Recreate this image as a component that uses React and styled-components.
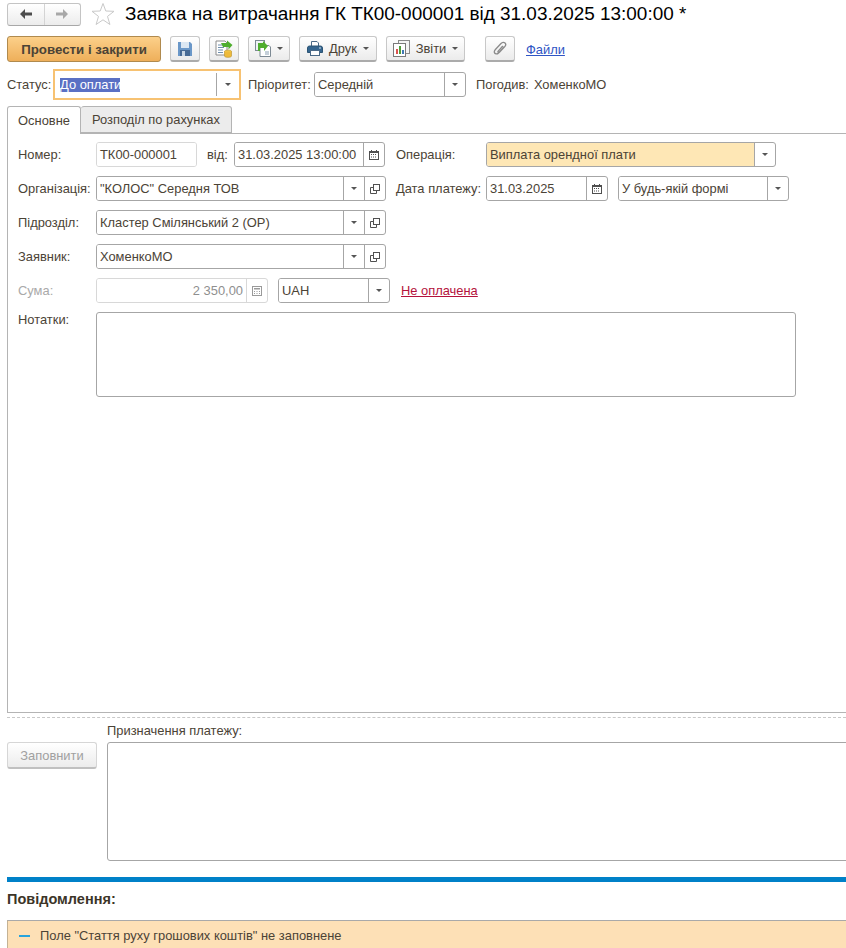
import React from 'react';
import styled, { createGlobalStyle } from 'styled-components';

const BackIcon = ({ color }) => (
  <svg width="14" height="12" viewBox="0 0 14 12">
    <path d="M6 1 L1 6 L6 11 V7.5 H13 V4.5 H6 Z" fill={color} />
  </svg>
);

const ForwardIcon = ({ color }) => (
  <svg width="14" height="12" viewBox="0 0 14 12">
    <path d="M8 1 L13 6 L8 11 V7.5 H1 V4.5 H8 Z" fill={color} />
  </svg>
);

const StarIcon = () => (
  <svg width="24" height="24" viewBox="0 0 24 24">
    <path
      d="M12 1.5 L14.8 9 L23 9.3 L16.5 14.4 L18.9 22.5 L12 17.8 L5.1 22.5 L7.5 14.4 L1 9.3 L9.2 9 Z"
      fill="#fff"
      stroke="#c9c9c9"
      strokeWidth="1"
    />
  </svg>
);

const SaveIcon = () => (
  <svg width="14" height="14" viewBox="0 0 14 14">
    <path d="M0 0 H12 L14 2 V14 H0 Z" fill="#6a97c8" />
    <rect x="3" y="0" width="8" height="6" fill="#dbe7f3" />
    <rect x="2" y="8" width="10" height="6" fill="#476a94" />
    <rect x="4" y="9" width="3" height="5" fill="#c9d6e4" />
  </svg>
);

const PostIcon = () => (
  <svg width="18" height="18" viewBox="0 0 18 18">
    <path d="M1 1 H10 L12 3 V15 H1 Z" fill="#fff" stroke="#8c8c8c" />
    <path d="M3 5 H8 M3 7.5 H9 M3 10 H8 M3 12.5 H8" stroke="#6f8fae" />
    <path d="M6 3 H12 V0.5 L17.5 5 L13.5 9.5 V7 H8 Z" fill="#4fae2e" />
    <ellipse cx="13" cy="11.5" rx="3.5" ry="1.5" fill="#f2cb4d" stroke="#b8902a" strokeWidth="0.6" />
    <path d="M9.5 11.5 V16 C9.5 17.8 16.5 17.8 16.5 16 V11.5" fill="#eeba3a" stroke="#b8902a" strokeWidth="0.6" />
  </svg>
);

const CopyIcon = () => (
  <svg width="16" height="17" viewBox="0 0 16 17">
    <rect x="0.5" y="0.5" width="9" height="10" fill="#eef2f5" stroke="#7d8a94" />
    <path d="M5 5.5 H14 L15.5 7 V16.5 H5 Z" fill="#fff" stroke="#7d8a94" />
    <path d="M3 3 H8 V1 L13 6 L9 11 V8 H5 V11 H3 Z" fill="#4fae2e" />
    <path d="M10 12 H14 M10 14 H14" stroke="#8aa0b2" />
  </svg>
);

const PrintIcon = () => (
  <svg width="16" height="15" viewBox="0 0 16 15">
    <path d="M4.5 5 V0.5 H10 L11.5 2 V5" fill="#fff" stroke="#4b6a88" />
    <path d="M0.5 7 Q0.5 5 2.5 5 H13.5 Q15.5 5 15.5 7 V11.5 H0.5 Z" fill="#34658f" stroke="#2c5474" />
    <rect x="3.5" y="9.5" width="9" height="5" fill="#fff" stroke="#4b6a88" />
    <rect x="12" y="6.5" width="2" height="1" fill="#cfe0ee" />
  </svg>
);

const ReportIcon = () => (
  <svg width="17" height="17" viewBox="0 0 17 17">
    <rect x="5.5" y="0.5" width="11" height="13" fill="#f4f4f4" stroke="#8a8a8a" />
    <rect x="0.5" y="3.5" width="12" height="13" fill="#fff" stroke="#7a7a7a" />
    <rect x="3" y="9" width="2" height="5" fill="#d9534f" />
    <rect x="6" y="6" width="2" height="8" fill="#4f9d3a" />
    <rect x="9" y="10" width="2" height="4" fill="#3f78b5" />
  </svg>
);

const ClipIcon = () => (
  <svg width="14" height="15" viewBox="0 0 14 15" fill="none">
    <path
      d="M11.5 5.5 L5.5 12 C4 13.6 1.8 13 1.4 11.5 C1 10.3 1.6 9.4 2.4 8.5 L8 2.5 C9.3 1.1 11 1 12 2 C13 3 12.9 4.4 11.8 5.6 L6.4 11.2 C5.6 12 4.4 11.2 5.2 10.1 L9.8 5"
      stroke="#8a8a8a"
      strokeWidth="1.3"
    />
  </svg>
);

const CalendarIcon = () => (
  <svg width="10" height="10" viewBox="0 0 10 10">
    <rect x="0" y="1" width="10" height="9" fill="#4f4f4f" />
    <rect x="2" y="0" width="1" height="2" fill="#4f4f4f" />
    <rect x="7" y="0" width="1" height="2" fill="#4f4f4f" />
    <rect x="1" y="3" width="8" height="6" fill="#fff" />
    <path d="M2 4 H3 V5 H2 Z M4 4 H5 V5 H4 Z M6 4 H7 V5 H6 Z M2 6.5 H3 V7.5 H2 Z M4 6.5 H5 V7.5 H4 Z M6 6.5 H7 V7.5 H6 Z" fill="#4f4f4f" />
  </svg>
);

const CalcIcon = () => (
  <svg width="10" height="10" viewBox="0 0 10 10">
    <rect x="0.5" y="0.5" width="9" height="9" fill="#fff" stroke="#9a9a9a" />
    <rect x="2" y="2" width="6" height="1.5" fill="#9a9a9a" />
    <path d="M2 5 H3 V6 H2 Z M4.5 5 H5.5 V6 H4.5 Z M7 5 H8 V6 H7 Z M2 7 H3 V8 H2 Z M4.5 7 H5.5 V8 H4.5 Z M7 7 H8 V8 H7 Z" fill="#9a9a9a" />
  </svg>
);

const OpenIcon = () => (
  <svg width="10" height="10" viewBox="0 0 10 10" fill="none">
    <rect x="3.5" y="0.5" width="6" height="6" stroke="#505050" />
    <path d="M3 3.5 H0.5 V9.5 H6.5 V7" stroke="#505050" />
  </svg>
);

const Caret = styled.span`
  width: 0;
  height: 0;
  border-left: 3px solid transparent;
  border-right: 3px solid transparent;
  border-top: 3px solid #555;
`;

function App() {
  return (
    <Page>
      <GlobalStyle />
      <Header>
        <NavGroup>
          <NavButton><BackIcon color="#4d4d4d" /></NavButton>
          <NavButton><ForwardIcon color="#a8a8a8" /></NavButton>
        </NavGroup>
        <StarIcon />
        <Title>Заявка на витрачання ГК ТК00-000001 від 31.03.2025 13:00:00 *</Title>
      </Header>

      <Toolbar>
        <PrimaryButton>Провести і закрити</PrimaryButton>
        <ToolButton $w={30}><SaveIcon /></ToolButton>
        <ToolButton $w={30}><PostIcon /></ToolButton>
        <ToolButton $w={42}><CopyIcon /><Caret /></ToolButton>
        <ToolButton $w={78}><PrintIcon /><span>Друк</span><Caret /></ToolButton>
        <ToolButton $w={79}><ReportIcon /><span>Звіти</span><Caret /></ToolButton>
        <ClipButton $w={30}><ClipIcon /></ClipButton>
        <ToolLink>Файли</ToolLink>
      </Toolbar>

      <StatusRow>
        <StatusLabel>Статус:</StatusLabel>
        <FocusedField>
          <FocusedValue><Selected>До оплати</Selected></FocusedValue>
          <FocusedCaret><Caret /></FocusedCaret>
        </FocusedField>
        <PriorityLabel>Пріоритет:</PriorityLabel>
        <Field $w={152}>
          <Value>Середній</Value>
          <FieldButton><Caret /></FieldButton>
        </Field>
        <ApprovedLabel>Погодив:</ApprovedLabel>
        <ApprovedName>ХоменкоМО</ApprovedName>
      </StatusRow>

      <Tabs>
        <Tab $active>Основне</Tab>
        <Tab>Розподіл по рахунках</Tab>
      </Tabs>

      <Panel>
        <FormRow>
          <Label>Номер:</Label>
          <Field $w={101} $light>
            <Value>ТК00-000001</Value>
          </Field>
          <InnerLabel>від:</InnerLabel>
          <Field $w={151}>
            <Value>31.03.2025 13:00:00</Value>
            <FieldButton><CalendarIcon /></FieldButton>
          </Field>
          <SideLabel $gap={11}>Операція:</SideLabel>
          <Field $w={290}>
            <Value $fill="#fee7b5">Виплата орендної плати</Value>
            <FieldButton><Caret /></FieldButton>
          </Field>
        </FormRow>
        <FormRow>
          <Label>Організація:</Label>
          <Field $w={290}>
            <Value>"КОЛОС" Середня ТОВ</Value>
            <FieldButton><Caret /></FieldButton>
            <FieldButton><OpenIcon /></FieldButton>
          </Field>
          <SideLabel $gap={10}>Дата платежу:</SideLabel>
          <Field $w={122}>
            <Value>31.03.2025</Value>
            <FieldButton><CalendarIcon /></FieldButton>
          </Field>
          <Field $w={171} $gap={10}>
            <Value>У будь-якій формі</Value>
            <FieldButton><Caret /></FieldButton>
          </Field>
        </FormRow>
        <FormRow>
          <Label>Підрозділ:</Label>
          <Field $w={290}>
            <Value>Кластер Смілянський 2 (ОР)</Value>
            <FieldButton><Caret /></FieldButton>
            <FieldButton><OpenIcon /></FieldButton>
          </Field>
        </FormRow>
        <FormRow>
          <Label>Заявник:</Label>
          <Field $w={290}>
            <Value>ХоменкоМО</Value>
            <FieldButton><Caret /></FieldButton>
            <FieldButton><OpenIcon /></FieldButton>
          </Field>
        </FormRow>
        <FormRow>
          <Label $muted>Сума:</Label>
          <Field $w={172} $light>
            <Value $right $muted>2 350,00</Value>
            <FieldButton $light><CalcIcon /></FieldButton>
          </Field>
          <Field $w={112} $gap={10}>
            <Value>UAH</Value>
            <FieldButton><Caret /></FieldButton>
          </Field>
          <StatusLink>Не оплачена</StatusLink>
        </FormRow>
        <NotesRow>
          <Label>Нотатки:</Label>
          <Notes />
        </NotesRow>
      </Panel>

      <DashedLine />

      <PurposeGrid>
        <FillButton>Заповнити</FillButton>
        <PurposeColumn>
          <PurposeLabel>Призначення платежу:</PurposeLabel>
          <PurposeBox />
        </PurposeColumn>
      </PurposeGrid>

      <BlueBar />
      <MessagesTitle>Повідомлення:</MessagesTitle>
      <Message>
        <MessageDash />
        Поле "Стаття руху грошових коштів" не заповнене
      </Message>
    </Page>
  );
}

export default App;

const GlobalStyle = createGlobalStyle`
  html, body {
    margin: 0;
    padding: 0;
    background: #fff;
    overflow: hidden;
  }
  * {
    box-sizing: border-box;
  }
`;

const Page = styled.div`
  width: 846px;
  height: 948px;
  overflow: hidden;
  padding: 3px 0 0 7px;
  font-family: 'Liberation Sans', Arial, sans-serif;
  font-size: 12.9px;
  color: #4b4336;
`;

const Header = styled.div`
  display: flex;
  align-items: center;
  height: 22px;
`;

const NavGroup = styled.div`
  display: flex;
  width: 74px;
  height: 23px;
  margin-right: 10px;
  border: 1px solid #c4c4c4;
  border-bottom-color: #a8a8a8;
  border-radius: 3px;
  background: linear-gradient(#fff, #ececec);
`;

const NavButton = styled.div`
  flex: 1;
  display: flex;
  align-items: center;
  justify-content: center;

  & + & {
    border-left: 1px solid #d4d4d4;
  }
`;

const Title = styled.div`
  margin-left: 10px;
  font-size: 18.93px;
  color: #000;
  white-space: nowrap;
`;

const Toolbar = styled.div`
  display: flex;
  align-items: center;
  gap: 9px;
  height: 26px;
  margin-top: 11px;
`;

const PrimaryButton = styled.div`
  width: 154px;
  height: 26px;
  display: flex;
  align-items: center;
  justify-content: center;
  border: 1px solid #b08a4e;
  border-radius: 3px;
  background: linear-gradient(#fcd08a, #eeaf5a);
  font-size: 13.3px;
  font-weight: 700;
  color: #4b4336;
`;

const ToolButton = styled.div`
  width: ${props => props.$w}px;
  height: 26px;
  display: flex;
  align-items: center;
  justify-content: center;
  gap: 6px;
  border: 1px solid #c8c8c8;
  border-bottom: 2px solid #ababab;
  border-radius: 3px;
  background: linear-gradient(#fff, #ebebeb);
`;

const ClipButton = styled(ToolButton)`
  margin-left: 11px;
`;

const ToolLink = styled.a`
  margin-left: 2px;
  color: #2f55c4;
  text-decoration: underline;
`;

const StatusRow = styled.div`
  display: flex;
  align-items: center;
  height: 31px;
  margin-top: 7px;
`;

const StatusLabel = styled.span`
  width: 46px;
`;

const FocusedField = styled.div`
  width: 188px;
  height: 31px;
  display: flex;
  align-items: center;
  border: 2px solid #f7c272;
`;

const FocusedValue = styled.div`
  flex: 1;
  padding-left: 5px;
`;

const Selected = styled.span`
  display: inline-block;
  width: 60px;
  height: 14px;
  line-height: 14px;
  background: #5a70c4;
  color: #fff;
  white-space: nowrap;
`;

const FocusedCaret = styled.div`
  width: 23px;
  height: 23px;
  display: flex;
  align-items: center;
  justify-content: center;
  border-left: 1px solid #a6a6a6;
`;

const PriorityLabel = styled.span`
  width: 66px;
  margin-left: 7px;
`;

const ApprovedLabel = styled.span`
  margin-left: 10px;
`;

const ApprovedName = styled.span`
  margin-left: 5px;
`;

const Tabs = styled.div`
  display: flex;
  height: 27px;
  margin-top: 6px;
`;

const Tab = styled.div`
  display: flex;
  align-items: center;
  justify-content: center;
  width: ${props => (props.$active ? '74px' : '151px')};
  border: 1px solid #b4b4b4;
  border-bottom: ${props => (props.$active ? 'none' : '1px solid #b4b4b4')};
  border-left: ${props => (props.$active ? '1px solid #b4b4b4' : 'none')};
  border-radius: 3px 3px 0 0;
  background: ${props => (props.$active ? '#fff' : '#ececec')};
  position: relative;
  z-index: ${props => (props.$active ? 1 : 0)};
  margin-bottom: ${props => (props.$active ? '-1px' : '0')};
  height: ${props => (props.$active ? '28px' : '27px')};
`;

const Panel = styled.div`
  width: 860px;
  height: 580px;
  display: flex;
  flex-direction: column;
  gap: 9px;
  padding: 8px 0 0 10px;
  border: 1px solid #b4b4b4;
`;

const FormRow = styled.div`
  display: flex;
  align-items: center;
  height: 25px;
`;

const NotesRow = styled.div`
  display: flex;
  align-items: flex-start;
`;

const Label = styled.span`
  width: 78px;
  color: ${props => (props.$muted ? '#a9a9a9' : '#4b4336')};
  white-space: nowrap;
`;

const InnerLabel = styled.span`
  width: 37px;
  padding-left: 10px;
`;

const SideLabel = styled.span`
  width: 90px;
  margin-left: ${props => props.$gap}px;
  white-space: nowrap;
`;

const Field = styled.div`
  width: ${props => props.$w}px;
  height: 25px;
  flex: none;
  display: flex;
  margin-left: ${props => props.$gap || 0}px;
  border: 1px solid ${props => (props.$light ? '#d8d8d8' : '#a6a6a6')};
  border-radius: 3px;
  overflow: hidden;
  background: #fff;
`;

const Value = styled.div`
  flex: 1;
  display: flex;
  align-items: center;
  justify-content: ${props => (props.$right ? 'flex-end' : 'flex-start')};
  padding: 0 3px;
  background: ${props => props.$fill || '#fff'};
  color: ${props => (props.$muted ? '#8f8f8f' : '#4b4336')};
  white-space: nowrap;
`;

const FieldButton = styled.div`
  width: 21px;
  flex: none;
  display: flex;
  align-items: center;
  justify-content: center;
  border-left: 1px solid ${props => (props.$light ? '#d8d8d8' : '#a6a6a6')};
`;

const StatusLink = styled.a`
  margin-left: 11px;
  color: #b4123c;
  text-decoration: underline;
`;

const Notes = styled.div`
  width: 700px;
  height: 85px;
  border: 1px solid #a6a6a6;
  border-radius: 3px;
`;

const DashedLine = styled.div`
  margin-top: 4px;
  border-top: 1px dashed #c8c8c8;
`;

const PurposeGrid = styled.div`
  display: flex;
  align-items: flex-start;
  gap: 10px;
  margin-top: 6px;
`;

const FillButton = styled.div`
  width: 90px;
  height: 27px;
  flex: none;
  margin-top: 18px;
  display: flex;
  align-items: center;
  justify-content: center;
  border: 1px solid #d6d6d6;
  border-bottom: 2px solid #c0c0c0;
  border-radius: 3px;
  background: linear-gradient(#fff, #ececec);
  color: #a0a0a0;
`;

const PurposeColumn = styled.div`
  flex: 1;
  display: flex;
  flex-direction: column;
  gap: 4px;
`;

const PurposeLabel = styled.div`
  height: 14px;
  line-height: 14px;
`;

const PurposeBox = styled.div`
  width: 760px;
  height: 119px;
  border: 1px solid #a6a6a6;
  border-radius: 3px;
`;

const BlueBar = styled.div`
  height: 5px;
  margin-top: 16px;
  background: #0081c8;
`;

const MessagesTitle = styled.div`
  height: 14px;
  line-height: 14px;
  margin-top: 10px;
  font-size: 14.5px;
  font-weight: 700;
  color: #3c3528;
`;

const Message = styled.div`
  width: 860px;
  height: 28px;
  display: flex;
  align-items: center;
  margin-top: 14px;
  padding: 2px 0 0 11px;
  border-top: 1px solid #a9a9a9;
  border-left: 1px solid #c4b294;
  background: #fde0b6;
  white-space: pre;
`;

const MessageDash = styled.span`
  width: 11px;
  height: 2px;
  margin-right: 10px;
  background: #27a4dd;
`;
